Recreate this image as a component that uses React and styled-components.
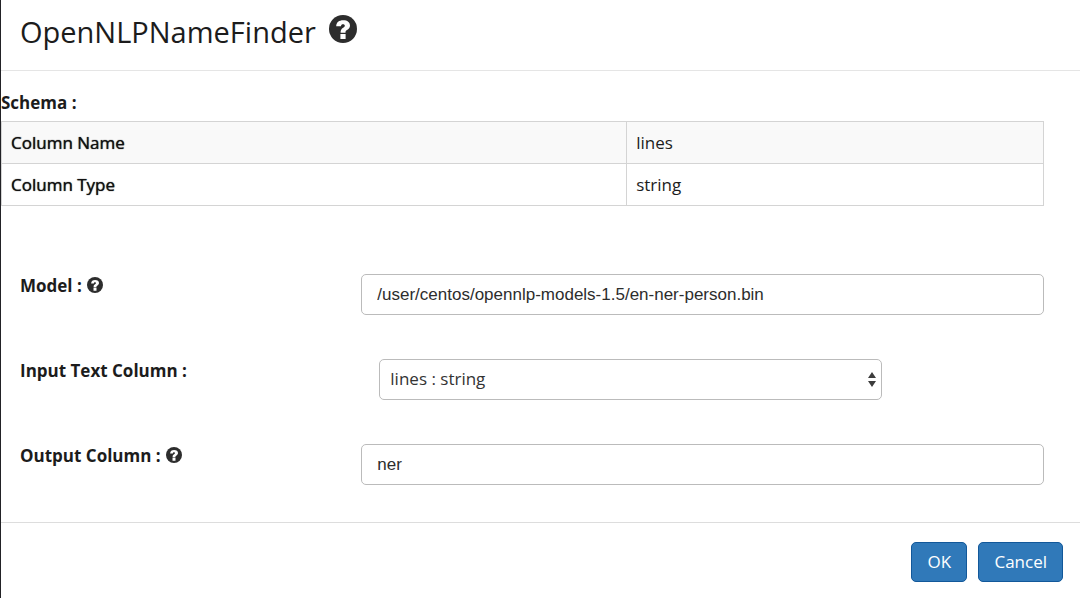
import React from 'react';
import styled, { createGlobalStyle } from 'styled-components';

const GlobalStyle = createGlobalStyle`
  *, *::before, *::after { box-sizing: border-box; }
  body {
    margin: 0;
    background: #fff;
    color: #1c1c1c;
    font-family: 'Open Sans', 'Noto Sans', sans-serif;
    font-size: 17px;
    line-height: 24px;
  }
`;

const Dialog = styled.main`
  min-height: 100vh;
  border-left: 1px solid #222226;
  background: #fff;
`;

const Header = styled.header`
  display: flex;
  align-items: center;
  gap: 13px;
  padding: 12px 19px 18px;
  border-bottom: 1px solid #e5e5e5;
`;

const Title = styled.h1`
  margin: 0;
  font-size: 29px;
  font-weight: 400;
  line-height: 40px;
`;

const HelpButton = styled.button`
  display: inline-flex;
  padding: 0 0 2px;
  border: 0;
  background: none;
  color: #2d2d2d;
  cursor: pointer;
  svg {
    display: block;
    width: ${({ $size }) => $size}px;
    height: ${({ $size }) => $size}px;
  }
`;

const TitleHelp = styled(HelpButton)`
  align-self: flex-start;
  margin-top: 3px;
`;

const Body = styled.div`
  padding: 20px 36px 37px 0;
`;

const SchemaTable = styled.table`
  width: 100%;
  border-collapse: collapse;
  table-layout: fixed;
  caption {
    padding-bottom: 6px;
    font-weight: 700;
    text-align: left;
  }
`;

const SchemaRow = styled.tr`
  background: ${({ $shaded }) => ($shaded ? '#f9f9f9' : '#fff')};
`;

const NameCell = styled.th`
  width: 60%;
  height: 42px;
  padding: 0 9px;
  border: 1px solid #d4d4d4;
  font-weight: 500;
  color: #111;
  text-align: left;
  text-shadow: 0 0 1px #111;
`;

const ValueCell = styled.td`
  padding: 0 9px;
  border: 1px solid #d4d4d4;
`;

const Form = styled.form`
  display: grid;
  gap: 44px;
  padding: 68px 0 0 19px;
`;

const Field = styled.div`
  display: grid;
  grid-template-columns: 1fr 2fr;
  align-items: start;
`;

const LabelGroup = styled.div`
  display: flex;
  align-items: center;
  gap: 5px;
  label { font-weight: 700; }
`;

const TextInput = styled.input`
  width: 100%;
  height: 41px;
  padding: 0 15px;
  border: 1px solid #bbb;
  border-radius: 5px;
  background: #fff;
  color: #2d2d2d;
  font-family: 'Liberation Sans', Arial, sans-serif;
  font-size: 17px;
`;

const SelectWrap = styled.div`
  position: relative;
  max-width: 503px;
  margin-left: 18px;
  svg {
    position: absolute;
    top: 13px;
    right: 6px;
    pointer-events: none;
  }
`;

const Select = styled.select`
  appearance: none;
  width: 100%;
  height: 41px;
  padding: 0 24px 2px 10px;
  border: 1px solid #bbb;
  border-radius: 5px;
  background: #fff;
  color: #333;
  font-family: inherit;
  font-size: 17px;
`;

const Footer = styled.footer`
  display: flex;
  justify-content: flex-end;
  gap: 11px;
  padding: 19px 17px 16px;
  border-top: 1px solid #ddd;
`;

const ActionButton = styled.button`
  min-width: 56px;
  height: 40px;
  padding: 0 15px 2px;
  border: 1px solid #12589a;
  border-radius: 5px;
  background: #3079b9;
  color: #fff;
  font-family: inherit;
  font-size: 17px;
  cursor: pointer;
`;

function QuestionIcon() {
  return (
    <svg viewBox="0 0 28 28" aria-hidden="true">
      <circle cx="14" cy="14" r="14" fill="currentColor" />
      <path
        d="M7.2 11.2C7.3 7.2 10 5.2 14.2 5.2C18.4 5.2 21 7.2 21 10.6C21 12.8 19.7 14.1 18 15.1C16.8 15.8 16.5 16.4 16.5 17.8H11.6C11.5 15 12.4 13.8 14.2 12.7C15.4 12 15.8 11.6 15.8 10.7C15.8 9.7 15.1 9.2 14 9.2C12.8 9.2 12.1 9.8 12 11.2ZM11.4 19H16.6V24H11.4Z"
        fill="#fff"
      />
    </svg>
  );
}

function SelectArrows() {
  return (
    <svg width="8" height="15" viewBox="0 0 8 15" aria-hidden="true">
      <path d="M4 0L8 6H0ZM0 9H8L4 15Z" fill="#3c3c3c" />
    </svg>
  );
}

function FieldLabel({ id, text, help }) {
  return (
    <LabelGroup>
      <label htmlFor={id}>{text}</label>
      {help && (
        <HelpButton type="button" $size={16} aria-label={help}>
          <QuestionIcon />
        </HelpButton>
      )}
    </LabelGroup>
  );
}

const schema = [
  { name: 'Column Name', value: 'lines' },
  { name: 'Column Type', value: 'string' },
];

export default function App() {
  return (
    <>
      <GlobalStyle />
      <Dialog>
        <Header>
          <Title>OpenNLPNameFinder</Title>
          <TitleHelp type="button" $size={28} aria-label="About OpenNLPNameFinder">
            <QuestionIcon />
          </TitleHelp>
        </Header>
        <Body>
          <SchemaTable>
            <caption>Schema :</caption>
            <tbody>
              {schema.map((row, i) => (
                <SchemaRow key={row.name} $shaded={i % 2 === 0}>
                  <NameCell scope="row">{row.name}</NameCell>
                  <ValueCell>{row.value}</ValueCell>
                </SchemaRow>
              ))}
            </tbody>
          </SchemaTable>
          <Form id="name-finder">
            <Field>
              <FieldLabel id="model" text="Model :" help="About the model" />
              <TextInput id="model" defaultValue="/user/centos/opennlp-models-1.5/en-ner-person.bin" />
            </Field>
            <Field>
              <FieldLabel id="input-column" text="Input Text Column :" />
              <SelectWrap>
                <Select id="input-column">
                  <option>lines : string</option>
                </Select>
                <SelectArrows />
              </SelectWrap>
            </Field>
            <Field>
              <FieldLabel id="output-column" text="Output Column :" help="About the output column" />
              <TextInput id="output-column" defaultValue="ner" />
            </Field>
          </Form>
        </Body>
        <Footer>
          <ActionButton type="submit" form="name-finder">OK</ActionButton>
          <ActionButton type="button">Cancel</ActionButton>
        </Footer>
      </Dialog>
    </>
  );
}
